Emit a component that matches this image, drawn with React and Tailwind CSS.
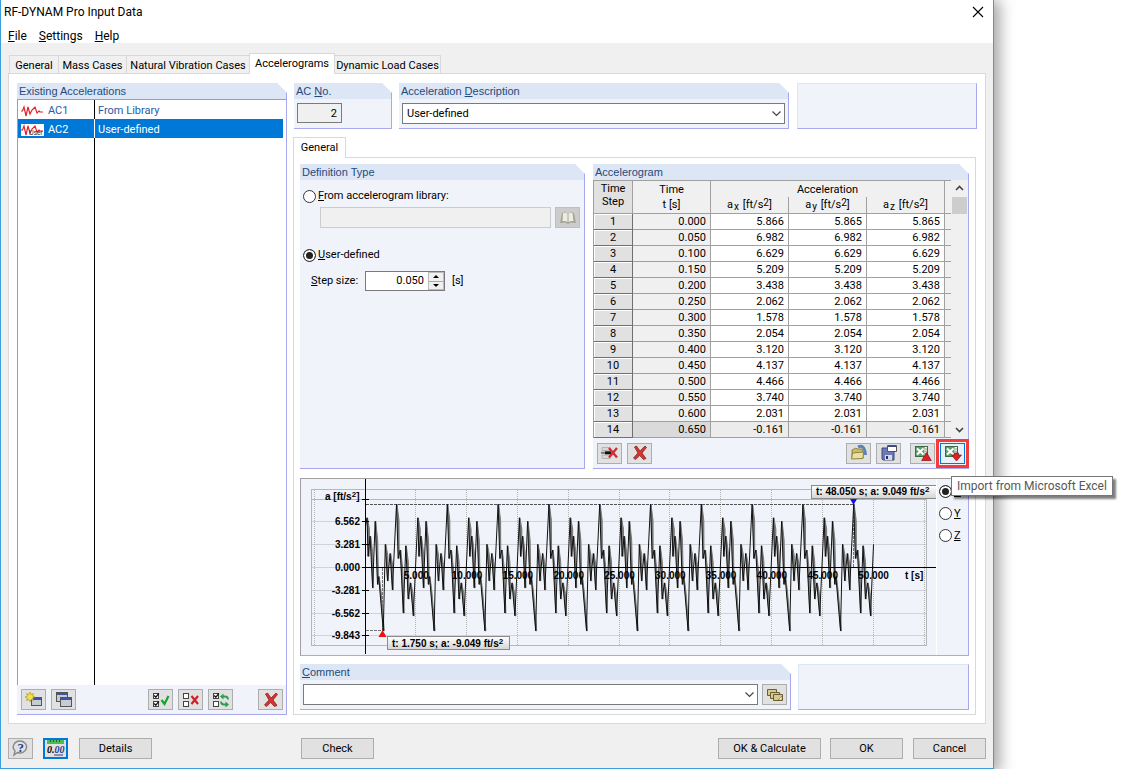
import React from "react";

const rows = [
  ["0.000", "5.866", "5.865", "5.865"],
  ["0.050", "6.982", "6.982", "6.982"],
  ["0.100", "6.629", "6.629", "6.629"],
  ["0.150", "5.209", "5.209", "5.209"],
  ["0.200", "3.438", "3.438", "3.438"],
  ["0.250", "2.062", "2.062", "2.062"],
  ["0.300", "1.578", "1.578", "1.578"],
  ["0.350", "2.054", "2.054", "2.054"],
  ["0.400", "3.120", "3.120", "3.120"],
  ["0.450", "4.137", "4.137", "4.137"],
  ["0.500", "4.466", "4.466", "4.466"],
  ["0.550", "3.740", "3.740", "3.740"],
  ["0.600", "2.031", "2.031", "2.031"],
  ["0.650", "-0.161", "-0.161", "-0.161"],
];

function Panel({ title, className = "", children }) {
  return (
    <section
      className={
        "flex flex-col border-r border-b border-[#a8a8ee] bg-[#f0f4fa] [clip-path:polygon(0_0,calc(100%_-_10px)_0,100%_10px,100%_100%,0_100%)] " +
        className
      }
    >
      <h2 className="h-4 shrink-0 bg-[#dce6f4] pl-0.5 font-['Liberation_Sans',sans-serif] text-[11px] leading-4 text-[#1f4a7c]">
        {title}
      </h2>
      {children}
    </section>
  );
}

function Blank({ className = "" }) {
  return (
    <div
      className={
        "shrink-0 border border-t-[#dce6f4] border-r-[#a8a8ee] border-b-[#a8a8ee] border-l-[#dce6f4] bg-[#f0f4fa] " +
        className
      }
    />
  );
}

function IconButton({ label, tone = "border border-[#adadad] bg-[#e1e1e1]", className = "", children }) {
  return (
    <button
      type="button"
      aria-label={label}
      className={"flex h-[21px] w-[25px] shrink-0 items-center justify-center " + tone + " " + className}
    >
      {children}
    </button>
  );
}

function Icon({ children, className = "size-[18px]" }) {
  return (
    <svg viewBox="0 0 18 18" className={className} fill="none" aria-hidden="true">
      {children}
    </svg>
  );
}

const RedCross = () => (
  <path d="M3.500 3 5.500 2 9 7 14 2 15.500 3.500 11 9 15 14.500 12.500 15.500 8.700 11.500 4.500 15.500 2.500 14 7 9Z" fill="#dc3036" stroke="#7d2a1a" strokeWidth=".8" />
);

const Win = ({ x, y, w = 11, h = 9 }) => (
  <g>
    <rect x={x + 0.5} y={y + 0.5} width={w} height={h} fill="#c6ccd6" stroke="#555" />
    <rect x={x + 1} y={y + 1} width={w - 1} height="2" fill="#3f569e" />
  </g>
);

const Tick = ({ x, y, on }) => (
  <g>
    <rect x={x + 0.5} y={y + 0.5} width="5" height="5" fill="#fff" stroke="#444" />
    {on && <path d={`M${x + 1.2} ${y + 2.5}l1.6 1.8 3-4`} stroke="#111" strokeWidth="1.3" />}
  </g>
);

const Excel = ({ up }) => (
  <Icon>
    <rect x="1.500" y="2.500" width="12" height="10" fill="#f2f8f1" stroke="#3d6b45" />
    <path d="M11 5h2M11 7.200h2M11 9.400h2" stroke="#63906a" strokeWidth=".8" />
    <rect x="2" y="3" width="8.500" height="9" fill="#5fa06a" />
    <path d="m3 4.500 6.500 6M9.500 4.500l-6.500 6" stroke="#fff" strokeWidth="2" />
    <path
      d={up ? "M12.500 8.500 17.300 16.500H7.700Z" : "M10.500 9h4v2h3l-5 6-5-6h3Z"}
      fill="#df1f28"
      stroke="#8c1010"
      strokeWidth=".7"
    />
  </Icon>
);

function Radio({ checked, name, id }) {
  return (
    <input
      type="radio"
      id={id}
      name={name}
      defaultChecked={checked}
      className="size-[13px] shrink-0 appearance-none rounded-full border border-[#333] bg-white checked:bg-[#222] checked:shadow-[inset_0_0_0_2px_white]"
    />
  );
}

function Select({ id, value, className = "" }) {
  return (
    <div className={"relative flex " + className}>
      <select
        id={id}
        defaultValue={value}
        className="h-[21px] w-full appearance-none border border-[#7a7a7a] bg-white pl-1 text-[11px]"
      >
        <option>{value}</option>
      </select>
      <svg viewBox="0 0 9 6" className="pointer-events-none absolute top-2 right-1 h-1.5 w-[9px]" fill="none">
        <path d="m.5.5 4 4 4-4" stroke="#444" strokeWidth="1.200" />
      </svg>
    </div>
  );
}

function Wave({ user }) {
  return (
    <svg viewBox="0 0 23 12" className={user ? "h-3 w-[23px] bg-white" : "h-3 w-[23px]"} fill="none" aria-hidden="true">
      <path d="M0 6h1.500l1.500-4 2 9 2-9 2 7 2-4 3-3 2 6 2-2 1 1h3" stroke="#e0242c" strokeWidth="1.200" />
      {user && (
        <text x="8" y="11" fontSize="6.500" fontFamily="Liberation Sans" fill="#222">
          User
        </text>
      )}
    </svg>
  );
}

const wavePoints = [
  [0.15, 7.1], [0.26, 1.6], [0.45, 4.47], [0.7, -2.9], [0.95, 6.6], [1.18, -2.4], [1.3, -1.3],
  [1.75, -9.049], [1.95, 3.3], [2.17, -1.9], [2.42, 2], [2.65, -3.2], [3.05, 9.049], [3.22, 1.3],
  [3.42, 2.5], [3.72, -6.5], [3.97, 3.1], [4.2, -4.5], [4.42, -2.2], [4.7, -6.9],
];

function Chart() {
  const px = (t) => 64.5 + t * 10.16;
  const py = (a) => 88.5 - a * 7;
  const pts = [[0, 5.866]];
  for (let k = 0; k < 10; k++) wavePoints.forEach(([t, a]) => pts.push([t + k * 5, a]));
  pts.push([50, 3.3]);
  const xy = pts.map(([t, a]) => [px(t), py(a)]);
  const line = xy.map(([x, y], i) => (i ? "L" : "M") + x.toFixed(1) + " " + y.toFixed(1)).join("");
  const falls = xy
    .map(([x, y], i) => {
      const n = xy[i + 1];
      return n && n[1] > y
        ? `M${x.toFixed(1)} ${y.toFixed(1)}L${(n[0] - 0.3).toFixed(1)} ${n[1].toFixed(1)}h.8L${(x + 2).toFixed(1)} ${(y + (n[1] - y) * 0.3).toFixed(1)}Z`
        : "";
    })
    .join("");
  const ticks = [6.562, 3.281, 0, -3.281, -6.562, -9.75];
  const labels = ["6.562", "3.281", "0.000", "-3.281", "-6.562", "-9.843"];
  const secs = [5, 10, 15, 20, 25, 30, 35, 40, 45, 50];
  const lineY = (v) => Math.floor(py(v)) + 0.5;
  return (
    <svg
      viewBox="0 0 635 176"
      className="h-44 min-w-0 flex-1"
      preserveAspectRatio="xMinYMin meet"
      fontFamily="Liberation Sans, sans-serif"
      fontSize="10"
      fontWeight="bold"
    >
      <defs>
        <linearGradient id="tag" x1="0" y1="0" x2="0" y2="1">
          <stop offset="0" stopColor="#fff" />
          <stop offset="1" stopColor="#d4d4d4" />
        </linearGradient>
      </defs>
      <rect x="10.500" y="10.500" width="615" height="156" fill="none" stroke="#b4b8bc" />
      <path d="M11 20.500H625" stroke="#b4b8bc" />
      {ticks.map((v) => (
        <path key={v} d={`M11 ${lineY(v)}H625`} stroke="#d0d4d8" />
      ))}
      <path
        d={"M13.500 11V167M623.500 11V167" + secs.map((s) => `M${Math.round(px(s)) - 0.5} 11V167`).join("")}
        stroke="#b4b4b4"
        strokeDasharray="1 1"
      />
      <path d="M65 25.500H552" stroke="#555" strokeDasharray="3 1" />
      <path d="M65 151.500H81.500V88M552.500 25V88" stroke="#777" strokeDasharray="3 1" fill="none" />
      <path d={falls} stroke="#777" strokeWidth="1" fill="#777" transform="translate(.5 0)" />
      <path d={line} stroke="#111" strokeWidth="1" fill="none" strokeLinejoin="bevel" />
      <path d="M64.500 0V175M61 88.500H635M61 20.500h7" stroke="#000" />
      {ticks.map((v, i) => (
        <g key={v}>
          <path d={`M61 ${lineY(v)}h7`} stroke="#000" />
          <text x="59" y={lineY(v) + 3} textAnchor="end">
            {labels[i]}
          </text>
        </g>
      ))}
      <text x="24" y="21">
        a [ft/s<tspan dy="-3" fontSize="8">2</tspan><tspan dy="3">]</tspan>
      </text>
      {secs.map((s) => (
        <text key={s} x={px(s)} y="100" textAnchor="middle">
          {s}.000
        </text>
      ))}
      <text x="604" y="100">t [s]</text>
      <path d="M548.500 19h8l-4 7Z" fill="#1010f0" />
      <path d="M77.500 158h8l-4-7Z" fill="#f01010" />
      <rect x="510.500" y="6.500" width="130" height="13" fill="url(#tag)" stroke="#8a8a8a" />
      <text x="515" y="16">
        t: 48.050 s; a: 9.049 ft/s<tspan dy="-3" fontSize="8">2</tspan>
      </text>
      <rect x="86.500" y="157.500" width="122" height="13" fill="url(#tag)" stroke="#8a8a8a" />
      <text x="91" y="168">
        t: 1.750 s; a: -9.049 ft/s<tspan dy="-3" fontSize="8">2</tspan>
      </text>
    </svg>
  );
}

function AxisHead({ axis }) {
  return (
    <th scope="col" className="h-[17px] border-r border-b border-[#a0a0a0] p-0 text-center leading-4 font-normal">
      a<span className="relative top-0.5 mx-px text-[10px]">{axis}</span> [ft/s
      <span className="relative -top-0.5 text-[10px]">2</span>]
    </th>
  );
}

function TextButton({ children, className = "" }) {
  return (
    <button type="button" className={"h-[21px] shrink-0 border border-[#adadad] bg-[#e1e1e1] pt-0.5 text-[11px] " + className}>
      {children}
    </button>
  );
}

const tab = "border border-b-0 border-[#d9d9d9] h-[18px] pt-px leading-[18px] -ml-px text-center";

export default function App() {
  return (
    <div className="flex min-h-screen bg-white pr-[131px] font-[Roboto,'Open_Sans',sans-serif] text-[11px] leading-4 text-black">
      <main className="flex min-w-0 flex-1 flex-col border-r border-b border-l border-[#38a0dc] bg-[#f0f0f0] shadow-[4px_2px_14px_2px_rgba(0,0,0,0.35)]">
        <header className="bg-white">
          <div className="flex h-6 items-center justify-between pr-[9px] pl-[3px]">
            <h1 className="text-[12px]">RF-DYNAM Pro Input Data</h1>
            <button type="button" aria-label="Close">
              <svg viewBox="0 0 12 12" className="size-3" stroke="#000" strokeWidth="1.100">
                <path d="m1 1 10 10M11 1 1 11" />
              </svg>
            </button>
          </div>
          <nav className="flex h-[19px] items-center gap-3 pt-1 pl-[7px] text-[12px]">
            <button type="button"><u>F</u>ile</button>
            <button type="button"><u>S</u>ettings</button>
            <button type="button"><u>H</u>elp</button>
          </nav>
        </header>

        <div className="flex flex-1 flex-col px-[7px] pt-[10px]">
          <div className="flex h-5 items-end pl-0.5" role="tablist">
            <button type="button" role="tab" className={tab + " w-[50px]"}>General</button>
            <button type="button" role="tab" className={tab + " w-[69px]"}>Mass Cases</button>
            <button type="button" role="tab" className={tab + " w-[124px]"}>Natural Vibration Cases</button>
            <button type="button" role="tab" aria-selected="true" className="relative z-10 -mb-px -ml-px h-[21px] w-[86px] border border-b-0 border-[#d9d9d9] bg-white leading-[18px]">
              Accelerograms
            </button>
            <button type="button" role="tab" className={tab + " w-[107px]"}>Dynamic Load Cases</button>
          </div>

          <div className="flex flex-1 gap-1.5 border border-[#d9d9d9] bg-white pt-[9px] pr-[8px] pb-2 pl-2">
            <Panel title="Existing Accelerations" className="w-[270px] shrink-0">
              <div className="flex flex-1 flex-col border-t border-l border-[#a0a0a0] bg-white pr-[3px]">
                <ul className="flex flex-1 flex-col bg-[linear-gradient(#000,#000)] bg-[length:1px_100%] bg-[position:76px_0] bg-no-repeat">
                  <li className="flex h-[19px] items-center pt-0.5 pl-[3px] text-[#2a5aa5]">
                    <Wave />
                    <span className="ml-1 w-[50px]">AC1</span>
                    <span>From Library</span>
                  </li>
                  <li className="flex h-[19px] items-center bg-[#0078d7] bg-[linear-gradient(#fff,#fff)] bg-[length:1px_100%] bg-[position:76px_0] bg-no-repeat pt-0.5 pl-[3px] text-white">
                    <Wave user />
                    <span className="ml-1 w-[50px]">AC2</span>
                    <span>User-defined</span>
                  </li>
                </ul>
              </div>
              <div className="flex h-[29px] items-center gap-[5px] pr-[3px] pl-1">
                <IconButton label="New">
                  <Icon>
                    <Win x={6} y={6} w={10} h={8} />
                    <path d="m5 1 1 2.500 2.500-1L7.500 5 10 6 7.500 7l1 2.500L6 8.500 5 11 4 8.500 1.500 9.500l1-2.500L0 6l2.500-1-1-2.500L4 3.500Z" fill="#f5e04a" stroke="#a39118" strokeWidth=".6" />
                  </Icon>
                </IconButton>
                <IconButton label="Copy">
                  <Icon><Win x={1} y={1} w={11} h={9} /><Win x={5} y={6} w={11} h={9} /></Icon>
                </IconButton>
                <span className="flex-1" />
                <IconButton label="Select all">
                  <Icon><Tick x={1} y={2} on /><Tick x={1} y={10} on /><path d="m9.500 9 3 4 4-8" stroke="#17a32b" strokeWidth="2.200" /></Icon>
                </IconButton>
                <IconButton label="Deselect all">
                  <Icon><Tick x={1} y={2} /><Tick x={1} y={10} /><path d="m9.500 5 6.500 8M16 5l-6.500 8" stroke="#cf2026" strokeWidth="2.200" /></Icon>
                </IconButton>
                <IconButton label="Invert selection">
                  <Icon>
                    <Tick x={1} y={2} on /><Tick x={1} y={10} />
                    <path d="M10 5.500h3q3 0 3 3M15 13.500h-3q-3 0-3-3" stroke="#2a9e4a" strokeWidth="1.800" />
                    <path d="m8 5.500 3.500-3v6ZM17 13.500l-3.500-3v6Z" fill="#2a9e4a" />
                  </Icon>
                </IconButton>
                <IconButton label="Delete" className="ml-5"><Icon><RedCross /></Icon></IconButton>
              </div>
            </Panel>

            <div className="flex min-w-0 flex-1 flex-col">
              <div className="flex h-[46px] pl-px">
                <Panel title={<>AC <u>N</u>o.</>} className="mr-[7px] w-[98px] shrink-0">
                  <input aria-label="AC No." readOnly value="2" className="mt-1 ml-[3px] h-5 w-[45px] border border-[#7a7a7a] bg-[#f0f0f0] pr-1 text-right" />
                </Panel>
                <Panel title={<label htmlFor="desc">Acceleration <u>D</u>escription</label>} className="mr-2 min-w-0 flex-1">
                  <Select id="desc" value="User-defined" className="mt-1 mr-[3px] ml-[3px]" />
                </Panel>
                <Blank className="w-[180px]" />
              </div>

              <div className="mt-2 flex h-5">
                <button type="button" role="tab" aria-selected="true" className="relative z-10 -mb-px h-[21px] w-[53px] border border-b-0 border-[#d9d9d9] bg-white">
                  General
                </button>
              </div>

              <div className="mr-px flex flex-1 flex-col border border-[#d9d9d9] px-1.5 pt-1.5">
                <div className="flex h-[305px] gap-2">
                  <Panel title="Definition Type" className="min-w-0 flex-1">
                    <div className="mt-2 flex items-center gap-0.5 pl-[3px]">
                      <Radio name="def" id="def-lib" />
                      <label htmlFor="def-lib"><u>F</u>rom accelerogram library:</label>
                    </div>
                    <div className="mt-[3px] flex gap-1 pr-1 pl-5">
                      <input aria-label="Accelerogram library" disabled className="h-[21px] min-w-0 flex-1 border border-[#ccc] bg-[#f0f0f0]" />
                      <IconButton label="Library" tone="border border-[#bfbfbf] bg-[#ccc]">
                        <Icon>
                          <path d="M1 14 3 4l3-1 3 2 3-2 3 1 2 10-5-.5-3 1.500-3-1.500Z" fill="#a5a596" />
                          <path d="M4 4q3-1 4.500 1v8q-2-1.500-5-1ZM9.500 5q1.500-2 4-1l1 8q-3-.500-5 1Z" fill="#ecece2" />
                        </Icon>
                      </IconButton>
                    </div>
                    <div className="mt-[19px] flex items-center gap-0.5 pl-[3px]">
                      <Radio name="def" id="def-user" checked />
                      <label htmlFor="def-user"><u>U</u>ser-defined</label>
                    </div>
                    <div className="mt-2 flex h-5 items-center pl-[11px]">
                      <label htmlFor="step" className="w-[54px]"><u>S</u>tep size:</label>
                      <div className="flex h-5 w-20 border border-[#7a7a7a] bg-white">
                        <input id="step" defaultValue="0.050" className="min-w-0 flex-1 pr-1 text-right" />
                        <span className="flex w-4 flex-col border border-[#bbb] bg-[#f0f0f0]">
                          <button type="button" aria-label="Increase" className="flex flex-1 items-center justify-center border-b border-[#aaa]">
                            <svg viewBox="0 0 6 3" className="h-[3px] w-1.5"><path d="m0 3 3-3 3 3Z" /></svg>
                          </button>
                          <button type="button" aria-label="Decrease" className="flex flex-1 items-center justify-center">
                            <svg viewBox="0 0 6 3" className="h-[3px] w-1.5"><path d="m0 0 3 3 3-3Z" /></svg>
                          </button>
                        </span>
                      </div>
                      <span className="ml-[7px]">[s]</span>
                    </div>
                  </Panel>

                  <div className="relative flex w-[376px] shrink-0">
                    <Panel title="Accelerogram" className="flex-1">
                      <div className="flex h-[258px] items-start">
                        <table className="w-[358px] table-fixed border-separate border-spacing-0 border-t border-l border-[#a0a0a0] bg-[#f0f0f0]">
                          <colgroup>
                            <col className="w-[39px]" />
                            <col className="w-[78px]" />
                            <col className="w-[78px]" />
                            <col className="w-[78px]" />
                            <col className="w-[78px]" />
                            <col />
                          </colgroup>
                          <thead>
                            <tr>
                              <th rowSpan={2} scope="col" className="border-r border-b border-[#a0a0a0] bg-[#e1e1e1] p-0 pb-1 leading-[13px] font-normal">
                                Time<br />Step
                              </th>
                              <th rowSpan={2} scope="col" className="border-r border-b border-[#a0a0a0] p-0 leading-[15px] font-normal">
                                Time<br />t [s]
                              </th>
                              <th colSpan={3} scope="colgroup" className="h-4 border-r border-[#a0a0a0] p-0 leading-[15px] font-normal">
                                Acceleration
                              </th>
                              <td rowSpan={2} className="border-b border-[#a0a0a0] p-0" />
                            </tr>
                            <tr>
                              <AxisHead axis="x" />
                              <AxisHead axis="y" />
                              <AxisHead axis="z" />
                            </tr>
                          </thead>
                          <tbody>
                            {rows.map((r, i) => (
                              <tr key={r[0]} className={i === 13 ? "bg-[#ececec]" : "bg-white"}>
                                <th scope="row" className="h-4 border-r border-b border-[#707070] bg-[#e1e1e1] p-0 leading-[15px] font-normal shadow-[inset_1px_1px_0_white]">
                                  {i + 1}
                                </th>
                                {r.map((v, j) => (
                                  <td
                                    key={j}
                                    className={
                                      "h-4 border-r border-b border-[#a0a0a0] p-0 pr-1 text-right leading-[15px] " +
                                      (j === 0 ? (i === 13 ? "bg-[#dadada]" : "bg-[#f0f0f0]") : "")
                                    }
                                  >
                                    {v}
                                  </td>
                                ))}
                                <td className="border-b border-[#a0a0a0] bg-[#f0f0f0] p-0" />
                              </tr>
                            ))}
                          </tbody>
                        </table>
                        <div className="flex h-full flex-1 flex-col items-center bg-[#f0f0f0]" aria-hidden="true">
                          <svg viewBox="0 0 15 17" className="h-[17px] w-[15px]" fill="none"><path d="m4 10 3.500-3.500L11 10" stroke="#444" strokeWidth="1.600" /></svg>
                          <span className="h-[17px] w-[15px] bg-[#cdcdcd]" />
                          <span className="flex-1" />
                          <svg viewBox="0 0 15 17" className="h-[17px] w-[15px]" fill="none"><path d="m4 7 3.500 3.500L11 7" stroke="#444" strokeWidth="1.600" /></svg>
                        </div>
                      </div>
                      <div className="flex flex-1 items-center gap-[5px] pl-1">
                        <IconButton label="Delete row">
                          <Icon>
                            <path d="M1 3.500h8v3H1ZM1 11h8v3.500H1Z" fill="#d8d8d8" stroke="#aaa" strokeWidth=".8" />
                            <path d="M0 8.800h4" stroke="#777" strokeWidth="2" />
                            <path d="M4 8.800h6" stroke="#111" strokeWidth="3" />
                            <path d="m8 4 8 9.500M16 4l-8 9.500" stroke="#cf3036" strokeWidth="2.400" />
                          </Icon>
                        </IconButton>
                        <IconButton label="Delete all"><Icon><RedCross /></Icon></IconButton>
                        <span className="flex-1" />
                        <IconButton label="Open">
                          <Icon>
                            <path d="M8 3c4-2 7 0 7.500 8" stroke="#5a84b4" strokeWidth="3" />
                            <path d="M2 14V6l4-2 1 1h5l1 3v6Z" fill="#c9bd6c" stroke="#7b7030" strokeWidth=".8" />
                            <path d="m1.500 15 1-6 11-1-.5 6.500Z" fill="#e9dfa0" stroke="#7b7030" strokeWidth=".8" />
                          </Icon>
                        </IconButton>
                        <IconButton label="Save">
                          <Icon>
                            <path d="M2 4h12v12H3l-1-1Z" fill="#6c7ab8" stroke="#3c467c" />
                            <path d="M5 11h7v5H5Z" fill="#d9dce5" />
                            <path d="M6 12h2v3H6Z" fill="#27305e" />
                            <path d="M7.500 1.500h9v6h-9Z" fill="#fff" stroke="#555" />
                            <path d="M8 2.500h8" stroke="#3c467c" />
                          </Icon>
                        </IconButton>
                        <IconButton label="Export to Microsoft Excel" className="ml-1"><Excel up /></IconButton>
                        <span className="-mr-px -ml-1 flex h-[29px] w-[33px] items-center justify-center border-3 border-[#f53c3c]">
                          <IconButton label="Import from Microsoft Excel" tone="border border-[#0078d7] bg-[#e5f1fb]"><Excel /></IconButton>
                        </span>
                      </div>
                    </Panel>
                    <div role="tooltip" className="absolute top-[312px] left-[358px] z-20 border border-[#767676] bg-white px-[5px] text-[12px] leading-[18px] whitespace-nowrap text-[#575757] shadow-[3px_3px_2px_rgba(0,0,0,0.5)]">
                      Import from Microsoft Excel
                    </div>
                  </div>
                </div>

                <div className="mt-[9px] flex h-[178px] border border-t-[#a0a0a0] border-r-[#a8a8ee] border-b-[#a8a8ee] border-l-[#a0a0a0] bg-[#f0f4fa]">
                  <Chart />
                  <fieldset className="flex w-8 shrink-0 flex-col gap-[5px] border-l border-white pt-1 pl-0.5">
                    {["X", "Y", "Z"].map((a) => (
                      <div key={a} className="flex items-center gap-0.5">
                        <Radio name="axis" id={"axis-" + a} checked={a === "X"} />
                        <label htmlFor={"axis-" + a} className="pt-px"><u>{a}</u></label>
                      </div>
                    ))}
                  </fieldset>
                </div>

                <div className="mt-2 flex h-[46px] gap-[7px]">
                  <Panel title={<label htmlFor="comment"><u>C</u>omment</label>} className="min-w-0 flex-1">
                    <div className="mt-1 flex gap-1 pr-[3px] pl-[3px]">
                      <Select id="comment" value="" className="flex-1" />
                      <IconButton label="Comment library">
                        <Icon>
                          <g fill="#d8c890" stroke="#6b5e33">
                            <path d="M1.500 3.500h9v6h-9Z" /><path d="M4.500 6.500h9v6h-9Z" /><path d="M7.500 8.500h9v6h-9Z" />
                          </g>
                          <path d="m12 14 4-4v4Z" fill="#fff" stroke="#6b5e33" strokeWidth=".6" />
                        </Icon>
                      </IconButton>
                    </div>
                  </Panel>
                  <Blank className="w-[171px]" />
                </div>
              </div>
            </div>
          </div>

          <footer className="flex h-11 items-center pt-1">
            <IconButton label="Help">
              <Icon>
                <path d="M8.500 2a6.500 6 0 1 1-3 11.500L2 16l1-4A6.500 6 0 0 1 8.500 2Z" fill="#dfe2e8" stroke="#888" strokeWidth="1.400" />
                <text x="5.500" y="12.500" fontSize="13" fontWeight="bold" fontFamily="Liberation Serif" fill="#2a3f80">?</text>
              </Icon>
            </IconButton>
            <IconButton label="Units and decimals" tone="border-2 border-[#0078d7] bg-[#e1e1e1]" className="ml-[10px]">
              <svg viewBox="0 0 21 17" className="h-[17px] w-[21px] shrink-0" aria-hidden="true">
                <path d="M2 0h17v4H2Z" fill="#4dbb52" />
                <path d="M5.500 0v2M8.500 0v2M11.500 0v2M14.500 0v2" stroke="#1c6924" />
                <text x="2" y="13" fontSize="10" fontStyle="italic" fontWeight="bold" fontFamily="Liberation Serif">
                  0.<tspan fill="#27408f">00</tspan>
                </text>
                <path d="M9 15h9" stroke="#27408f" />
              </svg>
            </IconButton>
            <TextButton className="ml-[11px] w-[73px]">Details</TextButton>
            <TextButton className="ml-[149px] w-[73px]">Check</TextButton>
            <span className="flex-1" />
            <TextButton className="w-[103px]">OK &amp; Calculate</TextButton>
            <TextButton className="ml-[9px] w-[73px]">OK</TextButton>
            <TextButton className="ml-[10px] w-[73px]">Cancel</TextButton>
          </footer>
        </div>
      </main>
    </div>
  );
}
